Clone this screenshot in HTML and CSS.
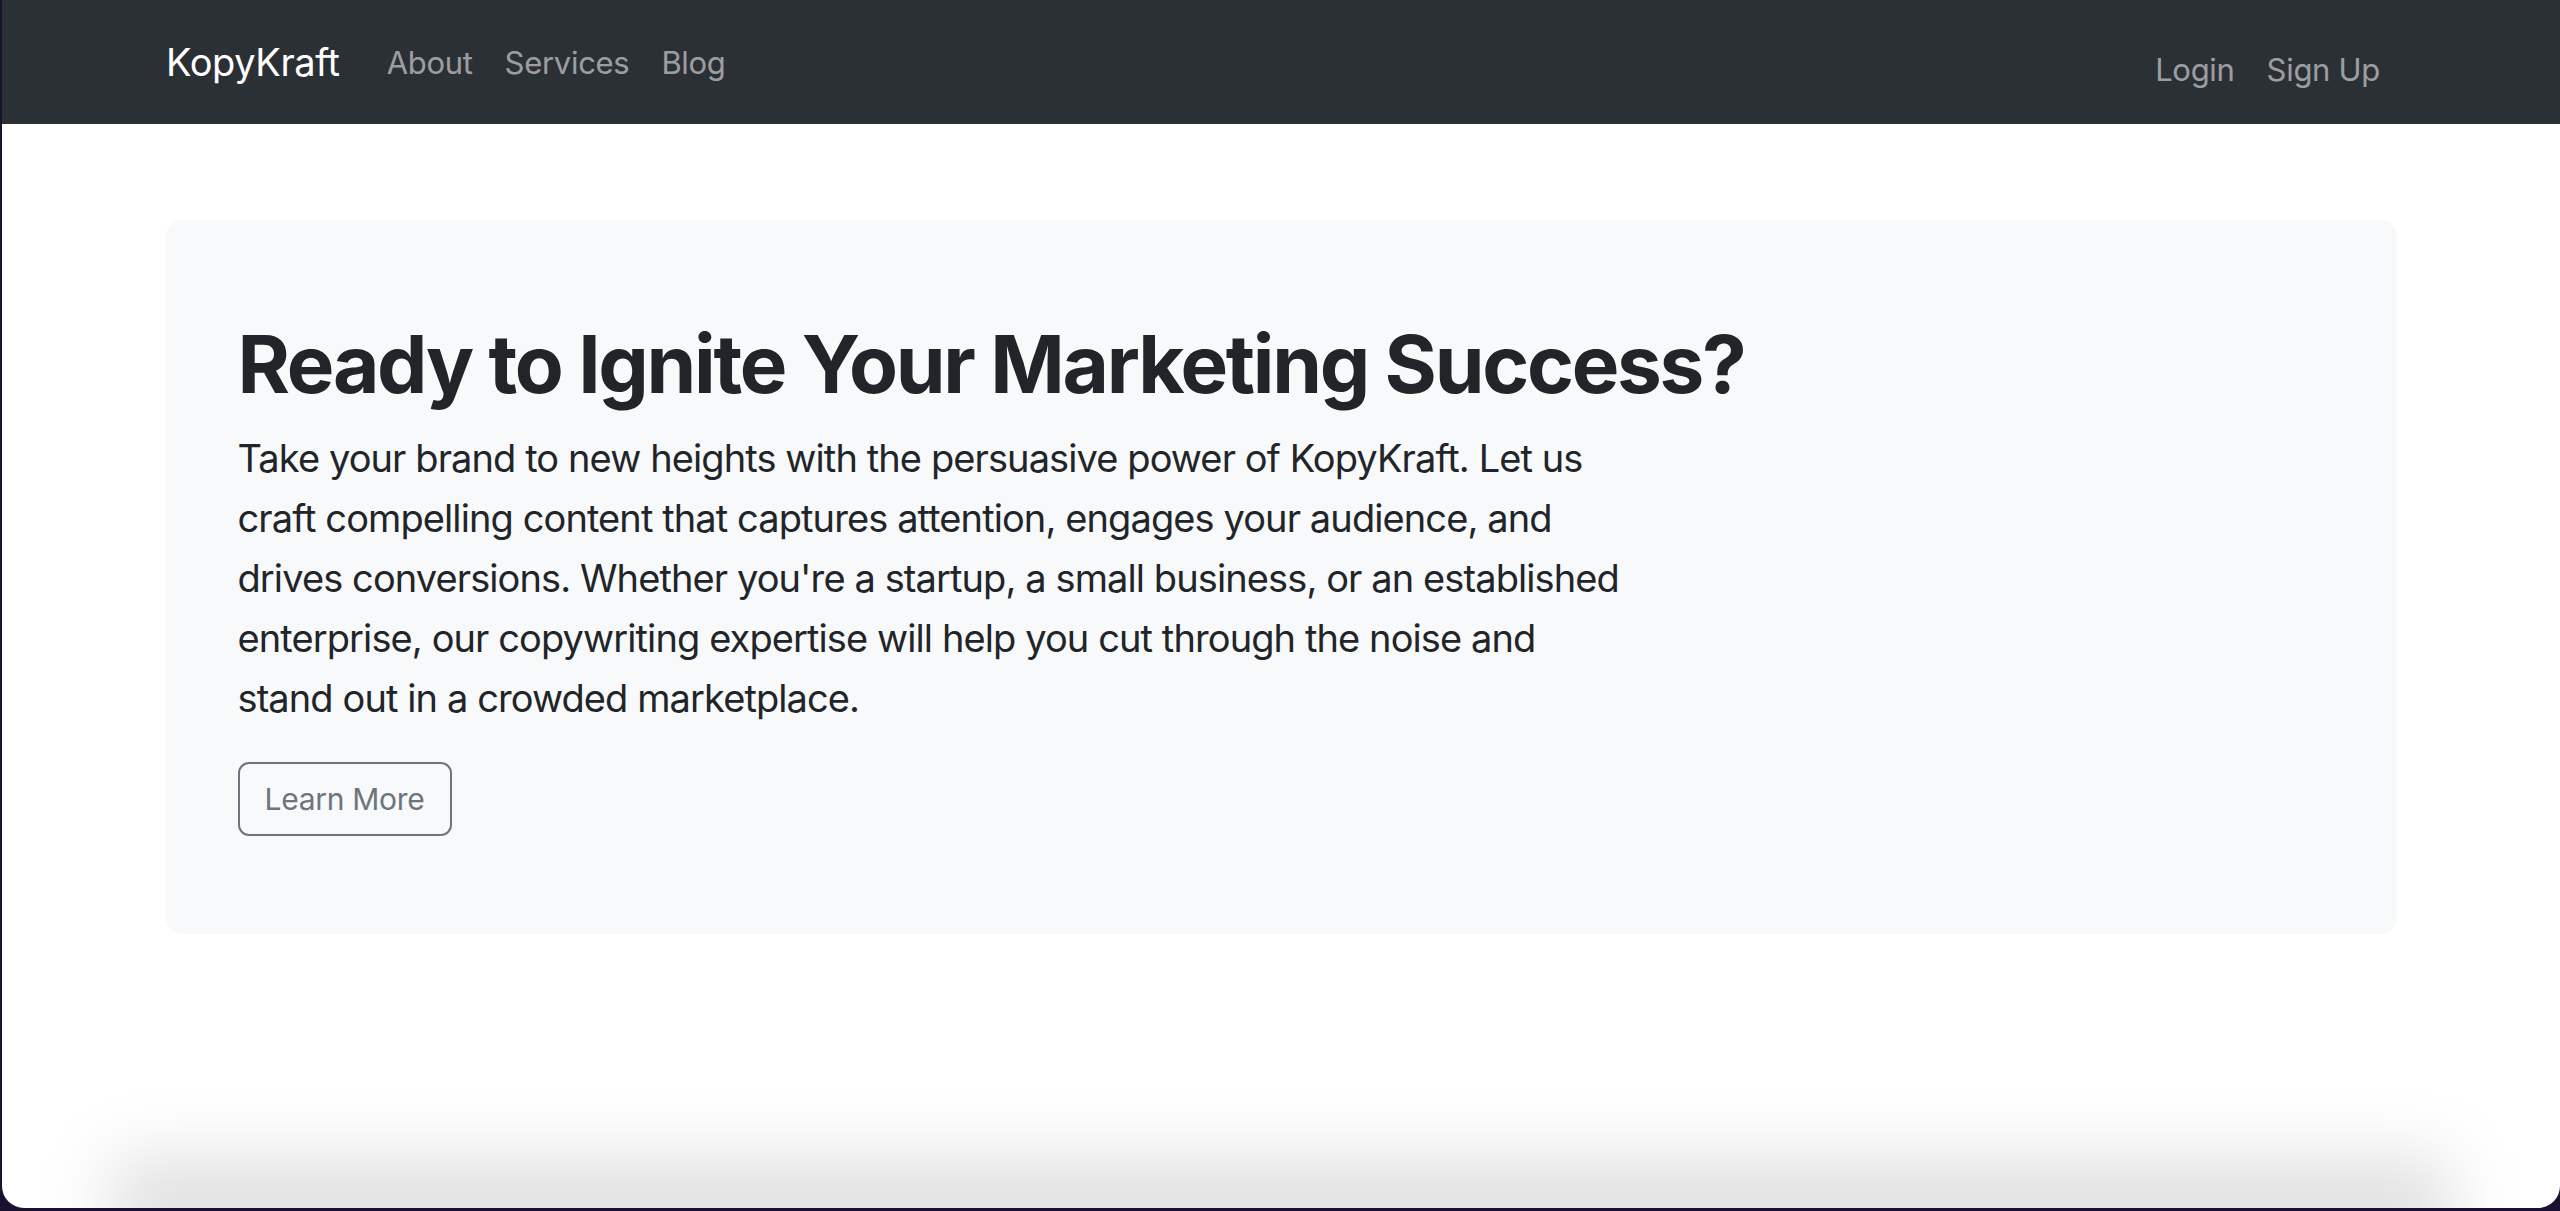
FILE: index.html
```html
<!DOCTYPE html>
<html lang="en">
<head>
<meta charset="utf-8">
<title>KopyKraft</title>
<link rel="stylesheet" href="styles.css">
</head>
<body>
<div class="window">
  <nav class="navbar">
    <div class="nav-left">
      <a class="brand" href="#">KopyKraft</a>
      <a class="nav-link" href="#">About</a>
      <a class="nav-link" href="#">Services</a>
      <a class="nav-link" href="#">Blog</a>
    </div>
    <div class="nav-right">
      <a class="nav-link" href="#">Login</a>
      <a class="nav-link" href="#">Sign Up</a>
    </div>
  </nav>
  <main class="main">
    <section class="jumbo">
      <h1 class="title">Ready to Ignite Your Marketing Success?</h1>
      <p class="lead">Take your brand to new heights with the persuasive power of KopyKraft. Let us craft compelling content that captures attention, engages your audience, and drives conversions. Whether you're a startup, a small business, or an established enterprise, our copywriting expertise will help you cut through the noise and stand out in a crowded marketplace.</p>
      <a class="btn" href="#">Learn More</a>
    </section>
  </main>
  <div class="shade"></div>
</div>
</body>
</html>
```
FILE: styles.css
```css
html, body {
  margin: 0;
  padding: 0;
  height: 100%;
}
body {
  background: #1a1030;
  font-family: "Inter", "Liberation Sans", sans-serif;
  overflow: hidden;
}
.window {
  position: relative;
  margin-left: 2px;
  height: 1208px;
  background: #ffffff;
  border-radius: 0 0 22px 22px;
  overflow: hidden;
}
.navbar {
  height: 124px;
  background: #2b3035;
  display: flex;
  justify-content: space-between;
  padding: 0 164px 0 164px;
  box-sizing: border-box;
}
.nav-left {
  display: flex;
  align-items: center;
}
.nav-right {
  display: flex;
  align-items: center;
  padding-top: 14px;
}
.brand {
  font-size: 38px;
  color: #ffffff;
  text-decoration: none;
  margin-right: 31px;
  letter-spacing: -0.4px;
}
.nav-link {
  font-size: 31px;
  color: rgba(255, 255, 255, 0.55);
  text-decoration: none;
  padding: 0 16px;
  letter-spacing: -0.3px;
}
.main {
  padding: 96px 0 0 0;
  display: flex;
  justify-content: center;
}
.jumbo {
  width: 2231px;
  height: 714px;
  box-sizing: border-box;
  background: #f8f9fa;
  border-radius: 16px;
  padding: 96px 72px 0 72px;
  color: #212529;
}
.title {
  margin: 0;
  font-size: 80px;
  font-weight: 700;
  line-height: 1.2;
  letter-spacing: -2.3px;
}
.lead {
  margin: 16px 0 34px 0;
  max-width: 1390px;
  font-size: 38px;
  line-height: 60px;
  letter-spacing: -0.9px;
}
.btn {
  display: inline-flex;
  align-items: center;
  justify-content: center;
  width: 214px;
  height: 74px;
  box-sizing: border-box;
  border: 2px solid #6c757d;
  border-radius: 11px;
  color: #6c757d;
  font-size: 30px;
  letter-spacing: -0.3px;
  text-decoration: none;
}
.shade {
  position: absolute;
  left: 110px;
  right: 110px;
  bottom: -50px;
  height: 100px;
  background: rgba(0, 0, 0, 0.12);
  filter: blur(34px);
  pointer-events: none;
}
```
